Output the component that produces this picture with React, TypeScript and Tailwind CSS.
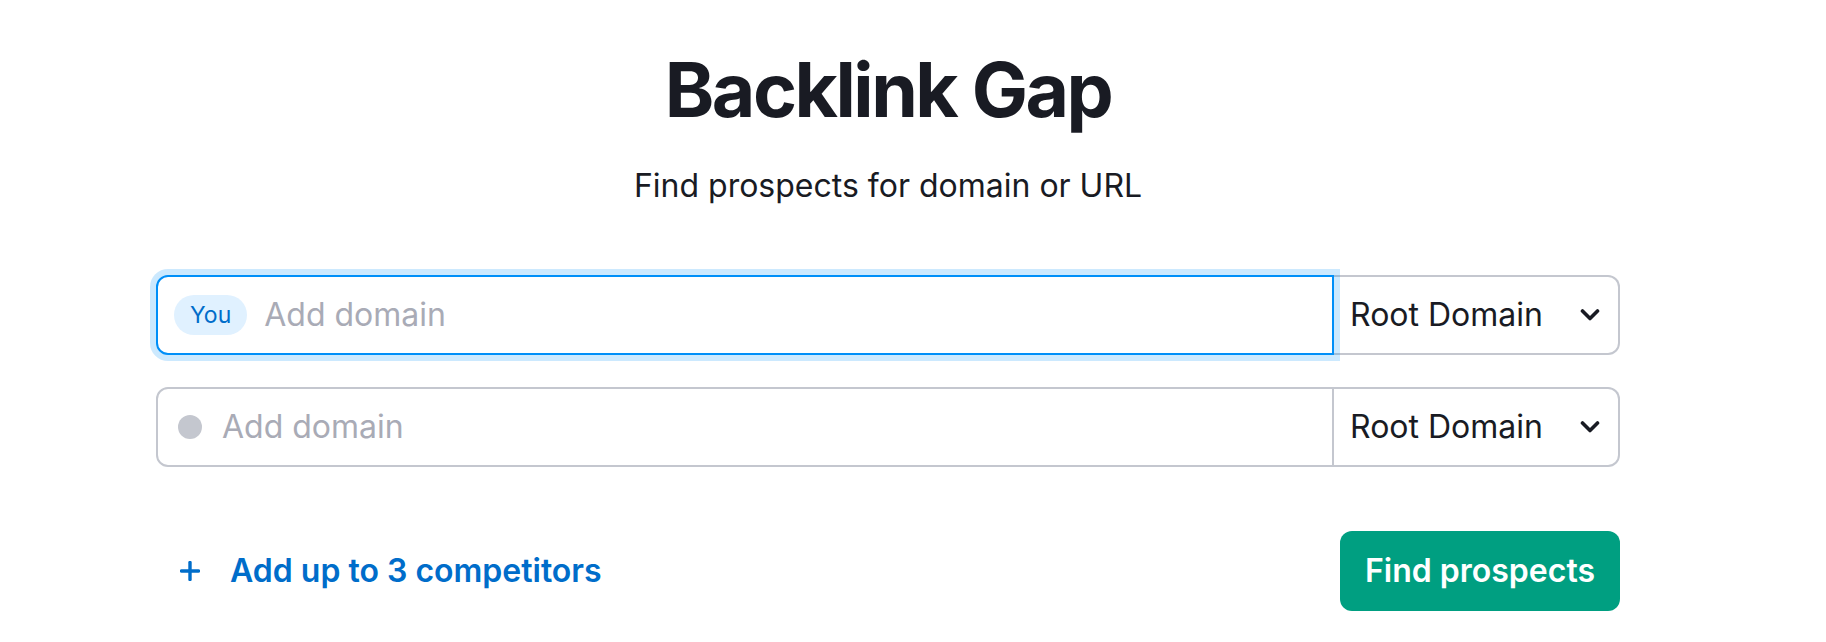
import React from "react";

function Chevron() {
  return (
    <svg width="20" height="12" viewBox="0 0 20 12" fill="none">
      <polyline points="2.5,2 10,9.5 17.5,2" stroke="#191b23" strokeWidth="3.6" strokeLinecap="round" strokeLinejoin="round" />
    </svg>
  );
}

function Plus() {
  return (
    <svg width="20" height="20" viewBox="0 0 20 20" fill="none">
      <line x1="10" y1="1.5" x2="10" y2="18.5" stroke="#006dca" strokeWidth="3.4" strokeLinecap="round" />
      <line x1="1.5" y1="10" x2="18.5" y2="10" stroke="#006dca" strokeWidth="3.4" strokeLinecap="round" />
    </svg>
  );
}

function Select() {
  return (
    <div className="w-[286px] h-[80px] flex items-center justify-between pl-[16px] pr-[18px] border-2 border-l-0 border-[#c4c7cf] rounded-r-[12px] bg-white">
      <span className="text-[32px] leading-[40px] text-[#191b23]">Root Domain</span>
      <Chevron />
    </div>
  );
}

export default function App() {
  return (
    <div className="w-full h-[642px] bg-white font-['Inter','Liberation_Sans',sans-serif] overflow-hidden">
      <div className="ml-[156px] w-[1464px] flex flex-col pt-[45px]">
        <h1 className="text-center text-[75px] leading-[90px] font-bold text-[#191b23] tracking-[-2.5px]">Backlink Gap</h1>
        <p className="text-center text-[32px] leading-[40px] text-[#191b23] mt-[31px]">Find prospects for domain or URL</p>

        <div className="flex mt-[69px]">
          <div className="relative z-10 flex-1 h-[80px] flex items-center pl-[16px] border-2 border-[#008ff8] rounded-l-[12px] bg-white shadow-[0_0_0_6px_rgba(0,143,248,0.2)]">
            <span className="h-[40px] px-[16px] flex items-center rounded-full bg-[#e0f1ff] text-[#006dca] text-[23px]">You</span>
            <span className="ml-[17px] text-[32px] leading-[40px] text-[#a9abb6]">Add domain</span>
          </div>
          <Select />
        </div>

        <div className="flex mt-[32px]">
          <div className="flex-1 h-[80px] flex items-center pl-[20px] border-2 border-[#c4c7cf] rounded-l-[12px] bg-white">
            <span className="w-[24px] h-[24px] rounded-full bg-[#c4c7cf]" />
            <span className="ml-[20px] text-[32px] leading-[40px] text-[#a9abb6]">Add domain</span>
          </div>
          <Select />
        </div>

        <div className="flex items-center justify-between mt-[64px]">
          <button className="flex items-center gap-[30px] pl-[24px] h-[80px] text-[#006dca] text-[32px] font-semibold">
            <Plus />
            <span>Add up to 3 competitors</span>
          </button>
          <button className="w-[280px] h-[80px] rounded-[12px] bg-[#009f81] text-white text-[32px] font-semibold">Find prospects</button>
        </div>
      </div>
    </div>
  );
}
